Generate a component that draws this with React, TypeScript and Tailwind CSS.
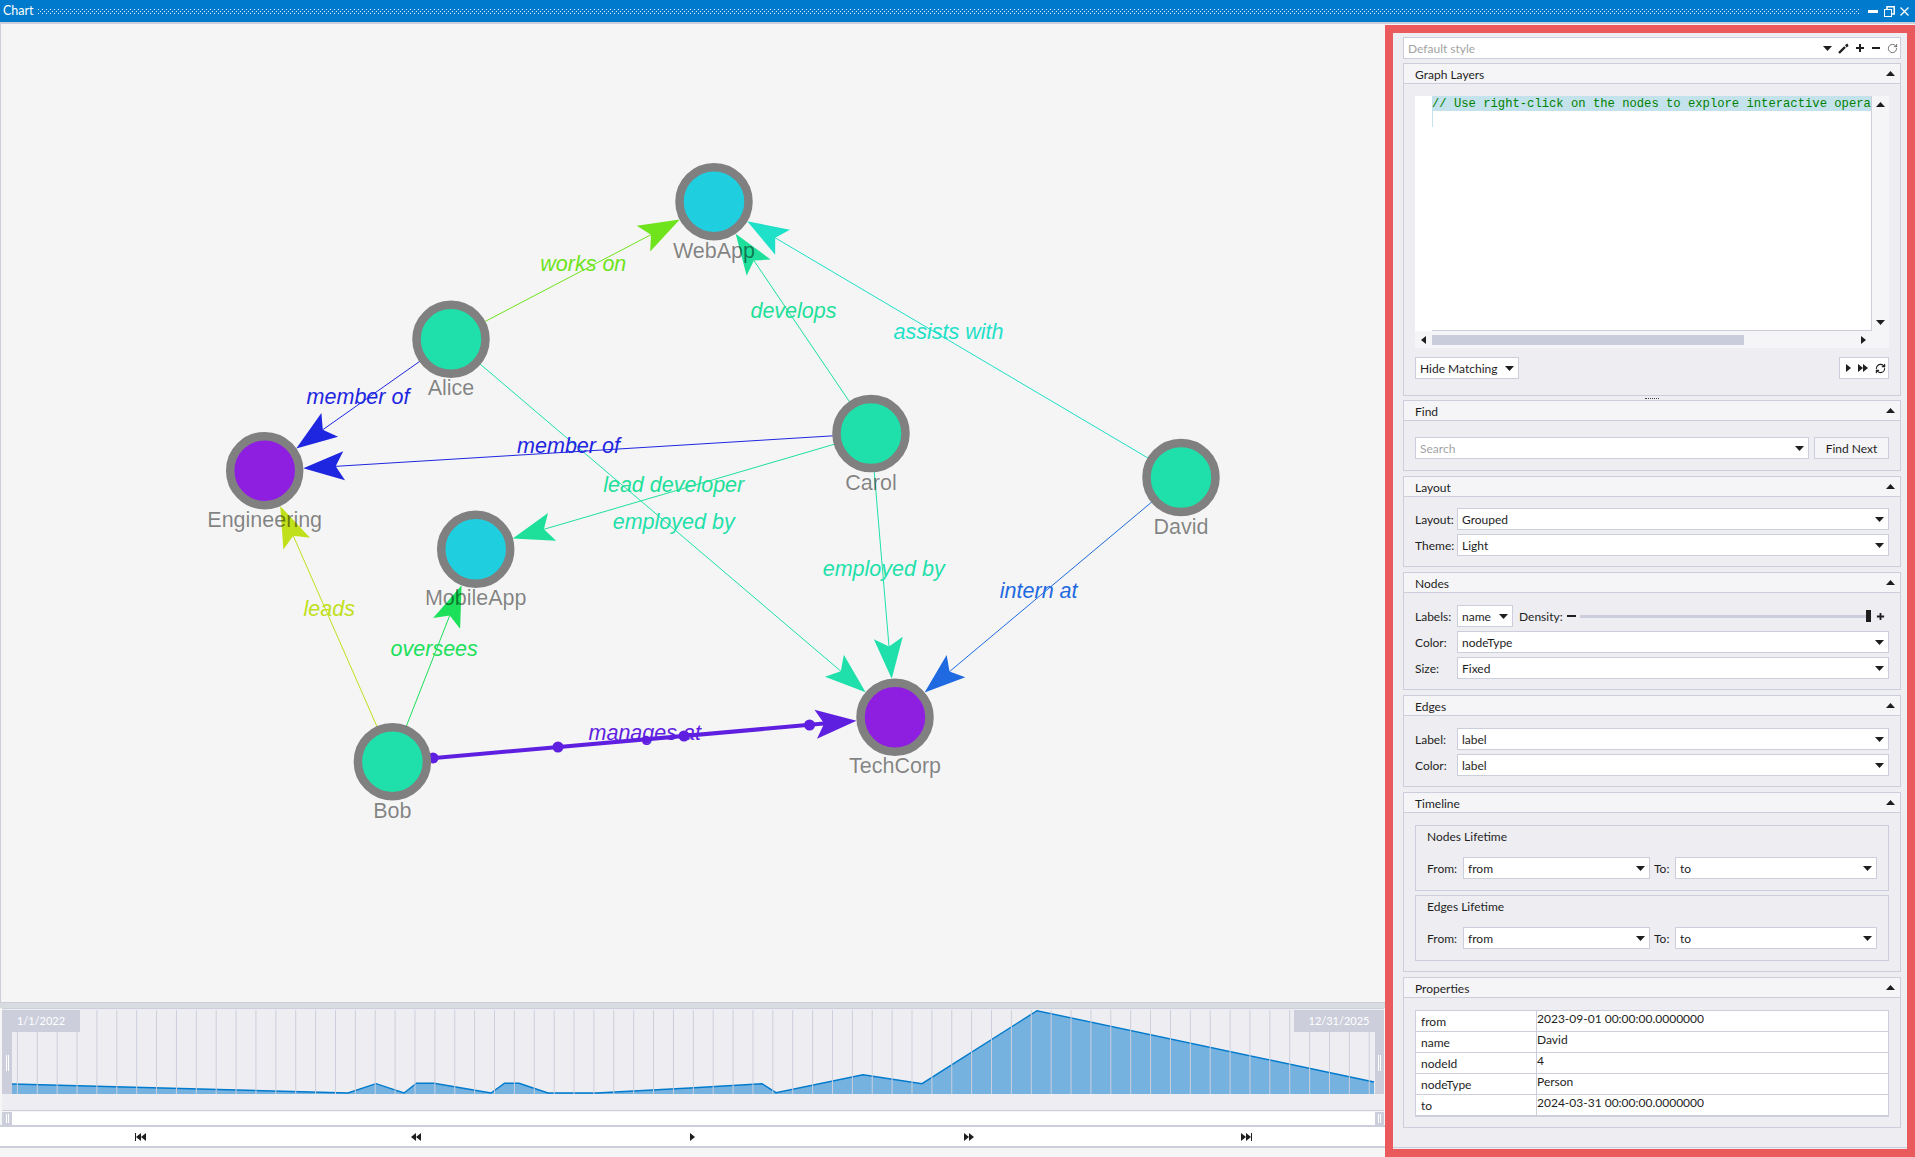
import { ReactNode } from "react";
import { RotateCw, RefreshCw } from "lucide-react";

const uiFont = { fontFamily: 'Lato, "Noto Sans", sans-serif' };

const nodes: Record<string, { x: number; y: number; fill: string }> = {
    WebApp: { x: 714, y: 201.7, fill: "#1fcfe0" },
    Alice: { x: 451, y: 339.3, fill: "#1fe0aa" },
    Engineering: { x: 264.7, y: 470.7, fill: "#8f1fe0" },
    MobileApp: { x: 475.7, y: 549.3, fill: "#1fcfe0" },
    Carol: { x: 871, y: 433.5, fill: "#1fe0aa" },
    David: { x: 1181, y: 477.5, fill: "#1fe0aa" },
    Bob: { x: 392.4, y: 761.7, fill: "#1fe0aa" },
    TechCorp: { x: 895, y: 717.3, fill: "#8f1fe0" },
};

const edges = [
    { from: "Alice", to: "WebApp", label: "works on", color: "#6fe31c", lx: 583.3, ly: 264 },
    { from: "Alice", to: "Engineering", label: "member of", color: "#1f26e0", lx: 358, ly: 397 },
    { from: "Alice", to: "TechCorp", label: "employed by", color: "#1fe0aa", lx: 673.7, ly: 522 },
    { from: "Carol", to: "WebApp", label: "develops", color: "#1fe09a", lx: 793.5, ly: 310.7 },
    { from: "Carol", to: "Engineering", label: "member of", color: "#1f26e0", lx: 568.5, ly: 446 },
    { from: "Carol", to: "MobileApp", label: "lead developer", color: "#1fe09a", lx: 673.7, ly: 485 },
    { from: "Carol", to: "TechCorp", label: "employed by", color: "#1fe0aa", lx: 883.7, ly: 569 },
    { from: "David", to: "WebApp", label: "assists with", color: "#1fe0c8", lx: 948.5, ly: 332 },
    { from: "David", to: "TechCorp", label: "intern at", color: "#1f6ae0", lx: 1038.7, ly: 591 },
    { from: "Bob", to: "Engineering", label: "leads", color: "#c0e01c", lx: 329.2, ly: 608.5 },
    { from: "Bob", to: "MobileApp", label: "oversees", color: "#1ce05a", lx: 434.2, ly: 648.5 },
    { from: "Bob", to: "TechCorp", label: "manages at", color: "#5f1fe0", lx: 644.7, ly: 733, width: 4 },
];

const areaPoints = "12,1084 348,1093 376,1083.7 404,1093 416.5,1083.3 434,1083.3 491,1093 504.5,1083.3 519,1083.3 548,1093 596,1093 690,1088 762,1083.7 776,1092.7 863,1074.7 922,1083.7 1037,1010.7 1374,1082";

function Graph() {
    return (
        <svg viewBox="1 24 1384 978" className="block w-full h-full" style={{ fontFamily: '"Liberation Sans", Arial, sans-serif' }}>
            {edges.map((e) => {
                const a = nodes[e.from];
                const b = nodes[e.to];
                const len = Math.hypot(b.x - a.x, b.y - a.y);
                const ux = (b.x - a.x) / len;
                const uy = (b.y - a.y) / len;
                const tx = b.x - ux * 38.6;
                const ty = b.y - uy * 38.6;
                const p = (along: number, perp: number) =>
                    `${tx - ux * along - uy * perp},${ty - uy * along + ux * perp}`;
                return (
                    <g key={e.from + e.to}>
                        <line x1={a.x} y1={a.y} x2={tx - ux * 30} y2={ty - uy * 30} stroke={e.color} strokeWidth={e.width ?? 1} />
                        <polygon points={`${p(0, 0)} ${p(41, 14.5)} ${p(32.5, 0)} ${p(41, -14.5)}`} fill={e.color} />
                    </g>
                );
            })}
            {[[433, 758, 5.5], [558, 747, 5.5], [646, 739.8, 4], [684, 736, 5.5], [809.6, 725, 5.5]].map(([x, y, r]) => (
                <circle key={x} cx={x} cy={y} r={r} fill="#5f1fe0" />
            ))}
            {Object.entries(nodes).map(([name, n]) => (
                <circle key={name} cx={n.x} cy={n.y} r={34.5} fill={n.fill} stroke="#808080" strokeWidth={8.5} />
            ))}
            {edges.map((e) => (
                <text key={e.from + e.to} x={e.lx} y={e.ly + 7} textAnchor="middle" fontSize={21.5} fontStyle="italic" fill={e.color}>
                    {e.label}
                </text>
            ))}
            {Object.entries(nodes).map(([name, n]) => (
                <text key={name} x={n.x} y={n.y + 56} textAnchor="middle" fontSize={21.5} fill="#000" fillOpacity={0.48}>
                    {name}
                </text>
            ))}
        </svg>
    );
}

function Caret({ up }: { up?: boolean }) {
    return (
        <svg width="9" height="5" viewBox="0 0 9 5" className="shrink-0">
            <polygon points={up ? "4.5,0 9,5 0,5" : "0,0 9,0 4.5,5"} fill="#1e1e1e" />
        </svg>
    );
}

function Tri({ dir }: { dir: "l" | "r" }) {
    return (
        <svg width="5" height="8" viewBox="0 0 5 8" className="shrink-0">
            <polygon points={dir === "r" ? "0,0 5,4 0,8" : "5,0 0,4 5,8"} fill="#1e1e1e" />
        </svg>
    );
}

function Combo({ value, muted, className }: { value: string; muted?: boolean; className?: string }) {
    return (
        <div className={`h-[22px] bg-white border border-[#cccedb] flex items-center justify-between pl-[4px] pr-[4px] ${className ?? ""}`}>
            <span className={`pt-[1px] ${muted ? "text-[#a2a4a5]" : ""}`}>{value}</span>
            <Caret />
        </div>
    );
}

function Section({ title, height, children }: { title: string; height: string; children: ReactNode }) {
    return (
        <div className={`border border-[#cccedb] ${height}`}>
            <div className="h-[20px] bg-[#f5f5f7] border-b border-[#cccedb] flex items-center justify-between pl-[11px] pr-[5px]">
                <span className="pt-[2px]">{title}</span>
                <Caret up />
            </div>
            {children}
        </div>
    );
}

function Field({ label, value }: { label: string; value: string }) {
    return (
        <div className="flex items-center">
            <span className="w-[42px] pt-[1px]">{label}</span>
            <Combo value={value} className="flex-1" />
        </div>
    );
}

function Lifetime({ title }: { title: string }) {
    return (
        <div className="border border-[#cccedb] h-[66px] px-[11px]">
            <div className="h-[31px] pt-[2px]">{title}</div>
            <div className="flex items-center">
                <span className="w-[36px] pt-[1px]">From:</span>
                <Combo value="from" className="w-[187px]" />
                <span className="w-[25px] pl-[4px] pt-[1px]">To:</span>
                <Combo value="to" className="w-[202px]" />
            </div>
        </div>
    );
}

const props = [
    ["from", "2023-09-01 00:00:00.0000000"],
    ["name", "David"],
    ["nodeId", "4"],
    ["nodeType", "Person"],
    ["to", "2024-03-31 00:00:00.0000000"],
];

function SidePanel() {
    return (
        <div className="w-[530px] shrink-0 mt-px border-8 border-[#ea5a5c] bg-[#eeeef2] pl-[10px] pr-[6px] pt-[4px] flex flex-col text-[#1e1e1e]">
            <div className="h-[22px] bg-white border border-[#cccedb] flex items-center justify-between pl-[4px] pr-[2px]">
                <span className="text-[#a2a4a5] pt-[1px]">Default style</span>
                <div className="flex items-center gap-[6px]">
                    <Caret />
                    <svg width="11" height="11" viewBox="0 0 11 11">
                        <path d="M1 10 L7 4" stroke="#1e1e1e" strokeWidth="2.4" />
                        <path d="M7 2 L9.5 0.5 L10.5 3 L8.5 4.5 Z" fill="#1e1e1e" />
                    </svg>
                    <svg width="10" height="10" viewBox="0 0 10 10">
                        <path d="M5 1v8M1 5h8" stroke="#1e1e1e" strokeWidth="2" />
                    </svg>
                    <svg width="10" height="10" viewBox="0 0 10 10">
                        <path d="M1 5h8" stroke="#1e1e1e" strokeWidth="2" />
                    </svg>
                    <RotateCw size={11} strokeWidth={1.6} className="text-[#444]" />
                </div>
            </div>

            <div className="mt-[4px]">
                <Section title="Graph Layers" height="h-[333px]">
                    <div className="px-[11px] pt-[12px]">
                        <div className="flex h-[235px]">
                            <div className="w-[17px] bg-white" />
                            <div className="w-[440px] bg-white border-r border-b border-[#cccedb] overflow-hidden">
                                <div className="h-[15px] bg-[#c4e2ec] text-[#008000] text-[12.2px] leading-[16px] whitespace-nowrap" style={{ fontFamily: '"Liberation Mono", monospace' }}>
                                    // Use right-click on the nodes to explore interactive opera
                                </div>
                                <div className="w-px h-[16px] bg-[#c4e2ec]" />
                            </div>
                            <div className="w-[17px] bg-[#f5f5f7] flex flex-col items-center justify-between py-[6px]">
                                <Caret up />
                                <Caret />
                            </div>
                        </div>
                        <div className="h-[17px] bg-[#f5f5f7] flex items-center">
                            <div className="w-[17px] flex justify-center"><Tri dir="l" /></div>
                            <div className="w-[312px] h-[10px] bg-[#c9ccda]" />
                            <div className="w-[145px] pr-[23px] flex justify-end"><Tri dir="r" /></div>
                        </div>
                        <div className="mt-[9px] flex justify-between">
                            <Combo value="Hide Matching" className="w-[104px]" />
                            <div className="w-[50px] h-[22px] bg-white border border-[#cccedb] flex items-center pl-[6px] gap-[7px]">
                                <Tri dir="r" />
                                <div className="flex"><Tri dir="r" /><Tri dir="r" /></div>
                                <RefreshCw size={11} strokeWidth={2.4} />
                            </div>
                        </div>
                    </div>
                </Section>
            </div>

            <div className="h-[4px] flex items-center justify-center">
                <div className="w-[14px] h-px border-t border-dotted border-[#444]" />
            </div>

            <Section title="Find" height="h-[71px]">
                <div className="px-[11px] pt-[16px] flex gap-[5px]">
                    <Combo value="Search" muted className="flex-1" />
                    <div className="w-[75px] h-[22px] bg-[#f5f5f7] border border-[#cccedb] flex items-center justify-center">
                        <span className="pt-[1px]">Find Next</span>
                    </div>
                </div>
            </Section>

            <div className="mt-[5px]">
                <Section title="Layout" height="h-[91px]">
                    <div className="px-[11px] pt-[11px] flex flex-col gap-[4px]">
                        <Field label="Layout:" value="Grouped" />
                        <Field label="Theme:" value="Light" />
                    </div>
                </Section>
            </div>

            <div className="mt-[5px]">
                <Section title="Nodes" height="h-[118px]">
                    <div className="px-[11px] pt-[12px] flex flex-col gap-[4px]">
                        <div className="flex items-center">
                            <span className="w-[42px] pt-[1px]">Labels:</span>
                            <Combo value="name" className="w-[56px]" />
                            <span className="ml-[6px] w-[48px] pt-[1px]">Density:</span>
                            <div className="w-[9px] h-[2px] bg-[#1e1e1e]" />
                            <div className="ml-[4px] w-[286px] h-[3px] bg-[#cccedb]" />
                            <div className="w-[5px] h-[12px] bg-[#1e1e1e]" />
                            <svg width="9" height="9" viewBox="0 0 10 10" className="ml-[5px]">
                                <path d="M5 1v8M1 5h8" stroke="#1e1e1e" strokeWidth="2" />
                            </svg>
                        </div>
                        <Field label="Color:" value="nodeType" />
                        <Field label="Size:" value="Fixed" />
                    </div>
                </Section>
            </div>

            <div className="mt-[5px]">
                <Section title="Edges" height="h-[92px]">
                    <div className="px-[11px] pt-[12px] flex flex-col gap-[4px]">
                        <Field label="Label:" value="label" />
                        <Field label="Color:" value="label" />
                    </div>
                </Section>
            </div>

            <div className="mt-[5px]">
                <Section title="Timeline" height="h-[180px]">
                    <div className="px-[11px] pt-[12px] flex flex-col gap-[4px]">
                        <Lifetime title="Nodes Lifetime" />
                        <Lifetime title="Edges Lifetime" />
                    </div>
                </Section>
            </div>

            <div className="mt-[5px]">
                <Section title="Properties" height="h-[151px]">
                    <div className="mx-[11px] mt-[12px] bg-white border border-[#cccedb] border-b-2">
                        {props.map(([k, v], i) => (
                            <div key={k} className={`flex ${i < props.length - 1 ? "h-[21px] border-b border-[#cccedb]" : "h-[20px]"}`}>
                                <div className="w-[121px] pl-[5px] pt-[2px] border-r border-[#cccedb]">{k}</div>
                                <div className="leading-[15px]">{v}</div>
                            </div>
                        ))}
                    </div>
                </Section>
            </div>

            <div className="mt-[19px] -ml-[10px] -mr-[6px] border-t border-[#cccedb]" />
        </div>
    );
}

function Timeline() {
    return (
        <div className="border-l-2 border-[#f5f5f5] pr-[1px]">
            <div className="relative h-[103px] border-y border-[#cccedb] bg-[#eeeef2]">
                <svg viewBox="2 1009 1382 101" className="block w-full h-full">
                    <polygon points={`${areaPoints} 1374,1094 12,1094`} fill="#75b2e0" />
                    <polyline points={areaPoints} fill="none" stroke="#007acc" strokeWidth={1.4} />
                    {Array.from({ length: 69 }, (_, i) => (
                        <line key={i} x1={17.4 + i * 19.88} x2={17.4 + i * 19.88} y1={1010} y2={1094} stroke="#cccedb" strokeWidth={1} />
                    ))}
                </svg>
                <div className="absolute left-0 top-[1px] w-[78px] h-[22px] bg-[#cccedb] text-white text-[11px] flex items-center justify-center">1/1/2022</div>
                <div className="absolute left-0 top-[23px] w-[10px] h-[62px] bg-[#cccedb] flex items-center justify-center">
                    <div className="w-[3px] h-[16px] border-x border-white" />
                </div>
                <div className="absolute right-0 top-[1px] w-[90px] h-[22px] bg-[#cccedb] text-white text-[11px] flex items-center justify-center">12/31/2025</div>
                <div className="absolute right-0 top-[23px] w-[9px] h-[62px] bg-[#cccedb] flex items-center justify-center">
                    <div className="w-[3px] h-[16px] border-x border-white" />
                </div>
            </div>
            <div className="mt-[1px] h-[13px] bg-white flex justify-between">
                <div className="w-[10px] bg-[#cccedb] flex items-center justify-center"><div className="w-[3px] h-[9px] border-x border-white" /></div>
                <div className="w-[9px] bg-[#cccedb] flex items-center justify-center"><div className="w-[3px] h-[9px] border-x border-white" /></div>
            </div>
        </div>
    );
}

function Transport() {
    return (
        <div className="h-[23px] bg-white border-y-2 border-[#cccedb] flex items-center">
            <div className="w-[135px]" />
            <div className="w-[11px] flex items-center justify-center">
                <div className="w-px h-[8px] bg-[#1e1e1e]" /><Tri dir="l" /><Tri dir="l" />
            </div>
            <div className="w-[265px]" />
            <div className="w-[10px] flex justify-center"><Tri dir="l" /><Tri dir="l" /></div>
            <div className="w-[269px]" />
            <div className="w-[5px] flex justify-center"><Tri dir="r" /></div>
            <div className="w-[269px]" />
            <div className="w-[10px] flex justify-center"><Tri dir="r" /><Tri dir="r" /></div>
            <div className="w-[267px]" />
            <div className="w-[11px] flex items-center justify-center">
                <Tri dir="r" /><Tri dir="r" /><div className="w-px h-[8px] bg-[#1e1e1e]" />
            </div>
        </div>
    );
}

export default function App() {
    return (
        <div className="w-[1915px] h-[1157px] overflow-hidden flex flex-col bg-[#f5f5f5] text-[12px] text-[#1e1e1e]" style={uiFont}>
            <div className="h-[22px] shrink-0 bg-[#007acc] flex items-center text-white pl-[3px]">
                <span className="w-[35px] text-[12.5px]">Chart</span>
                <svg height="5" className="flex-1 min-w-0">
                    <pattern id="grip" width="4" height="4" patternUnits="userSpaceOnUse">
                        <rect width="1" height="1" fill="#e4eef6" />
                        <rect x="2" y="2" width="1" height="1" fill="#e4eef6" />
                    </pattern>
                    <rect width="100%" height="5" fill="url(#grip)" />
                </svg>
                <div className="w-[56px] shrink-0 flex items-center pl-[9px]">
                    <div className="w-[10px] h-[3px] bg-white" />
                    <svg width="11" height="11" viewBox="0 0 11 11" fill="none" stroke="#fff" strokeWidth="1" className="ml-[6px]">
                        <rect x="0.5" y="3.5" width="7" height="7" />
                        <path d="M3 3V0.8H10.2V8H8" strokeWidth="1.5" />
                    </svg>
                    <svg width="9" height="9" viewBox="0 0 9 9" className="ml-[5px]" stroke="#fff" strokeWidth="1.3">
                        <path d="M0.5 0.5l8 8M8.5 0.5l-8 8" />
                    </svg>
                </div>
            </div>
            <div className="flex-1 min-h-0 flex border-t-2 border-[#cccedb]">
                <div className="w-[1385px] shrink-0 flex flex-col">
                    <div className="h-[979px] shrink-0 border-l border-b border-[#cccedb] bg-[#f5f5f5]">
                        <Graph />
                    </div>
                    <div className="h-[5px] shrink-0 bg-[#d8dbe0]" />
                    <Timeline />
                    <Transport />
                </div>
                <SidePanel />
            </div>
        </div>
    );
}
